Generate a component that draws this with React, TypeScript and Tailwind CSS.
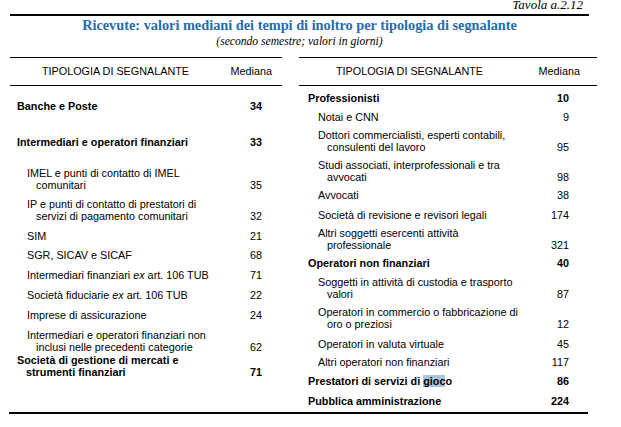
import React from 'react';

interface Row {
  lines: React.ReactNode[];
  value: string;
  bold?: boolean;
  mt: number;
}

const leftRows: Row[] = [
  { lines: ['Banche e Poste'], value: '34', bold: true, mt: 14 },
  { lines: ['Intermediari e operatori finanziari'], value: '33', bold: true, mt: 24 },
  { lines: ['IMEL e punti di contatto di IMEL', 'comunitari'], value: '35', mt: 19 },
  { lines: ['IP e punti di contatto di prestatori di', 'servizi di pagamento comunitari'], value: '32', mt: 7 },
  { lines: ['SIM'], value: '21', mt: 8 },
  { lines: ['SGR, SICAV e SICAF'], value: '68', mt: 7 },
  { lines: [<>Intermediari finanziari <i>ex</i> art. 106 TUB</>], value: '71', mt: 8 },
  { lines: [<>Società fiduciarie <i>ex</i> art. 106 TUB</>], value: '22', mt: 8 },
  { lines: ['Imprese di assicurazione'], value: '24', mt: 8 },
  { lines: ['Intermediari e operatori finanziari non', 'inclusi nelle precedenti categorie'], value: '62', mt: 8 },
  { lines: ['Società di gestione di mercati e', 'strumenti finanziari'], value: '71', bold: true, mt: 1 },
];

const rightRows: Row[] = [
  { lines: ['Professionisti'], value: '10', bold: true, mt: 6 },
  { lines: ['Notai e CNN'], value: '9', mt: 7 },
  { lines: ['Dottori commercialisti, esperti contabili,', 'consulenti del lavoro'], value: '95', mt: 6 },
  { lines: ['Studi associati, interprofessionali e tra', 'avvocati'], value: '98', mt: 6 },
  { lines: ['Avvocati'], value: '38', mt: 6 },
  { lines: ['Società di revisione e revisori legali'], value: '174', mt: 8 },
  { lines: ['Altri soggetti esercenti attività', 'professionale'], value: '321', mt: 6 },
  { lines: ['Operatori non finanziari'], value: '40', bold: true, mt: 6 },
  { lines: ['Soggetti in attività di custodia e trasporto', 'valori'], value: '87', mt: 7 },
  { lines: ['Operatori in commercio o fabbricazione di', 'oro o preziosi'], value: '12', mt: 6 },
  { lines: ['Operatori in valuta virtuale'], value: '45', mt: 8 },
  { lines: ['Altri operatori non finanziari'], value: '117', mt: 6 },
  {
    lines: [<>Prestatori di servizi di <span className="bg-[#a9c5de]">gioc</span>o</>],
    value: '86',
    bold: true,
    mt: 7,
  },
  { lines: ['Pubblica amministrazione'], value: '224', bold: true, mt: 8 },
];

function TableRows({ rows, boldPad, subPad, valuePad }: { rows: Row[]; boldPad: string; subPad: string; valuePad: string }) {
  return (
    <>
      {rows.map((row, i) => (
        <div
          key={i}
          className={`flex items-end justify-between ${row.bold ? `font-bold ${boldPad}` : subPad} ${valuePad}`}
          style={{ marginTop: row.mt }}
        >
          <div>
            {row.lines.map((line, j) => (
              <div key={j} className={`h-[12px] leading-[12px] whitespace-nowrap ${j > 0 ? 'pl-[9px]' : ''}`}>
                {line}
              </div>
            ))}
          </div>
          <div className="h-[12px] leading-[12px]">{row.value}</div>
        </div>
      ))}
    </>
  );
}

export default function App() {
  return (
    <div className="w-[621px] h-[427px] bg-white overflow-hidden text-black">
      {/* heading */}
      <div className="flex flex-col w-[579px] ml-[10px] h-[57px]">
        <div className="h-[14px] text-right pr-[6px] leading-[10px] font-['Liberation_Serif',serif] italic text-[13px]">
          Tavola a.2.12
        </div>
        <hr className="h-[2px] border-0 bg-black text-black" />
        <div className="text-center font-['Liberation_Serif',serif] font-bold text-[#1f6db3] text-[14.3px] leading-[18px]">
          Ricevute: valori mediani dei tempi di inoltro per tipologia di segnalante
        </div>
        <div className="text-center font-['Liberation_Serif',serif] italic text-[11.6px] leading-[14px] mt-[1px]">
          (secondo semestre; valori in giorni)
        </div>
      </div>

      {/* tables */}
      <div className="flex h-[355px] font-['Liberation_Sans',Arial,sans-serif] text-[10.8px]">
        <div className="w-[272px] ml-[10px]">
          <div className="h-[29px] border-y border-black flex items-center justify-between pl-[32px] pr-[10px]">
            <span>TIPOLOGIA DI SEGNALANTE</span>
            <span>Mediana</span>
          </div>
          <TableRows rows={leftRows} boldPad="pl-[7px]" subPad="pl-[17px]" valuePad="pr-[20px]" />
        </div>
        <div className="w-[298px] ml-[17px]">
          <div className="h-[29px] border-y border-black flex items-center justify-between pl-[37px] pr-[17px]">
            <span>TIPOLOGIA DI SEGNALANTE</span>
            <span>Mediana</span>
          </div>
          <TableRows rows={rightRows} boldPad="pl-[9px]" subPad="pl-[19px]" valuePad="pr-[28px]" />
        </div>
      </div>
      <div className="w-[579px] ml-[9px] h-[2px] bg-black" />
    </div>
  );
}
